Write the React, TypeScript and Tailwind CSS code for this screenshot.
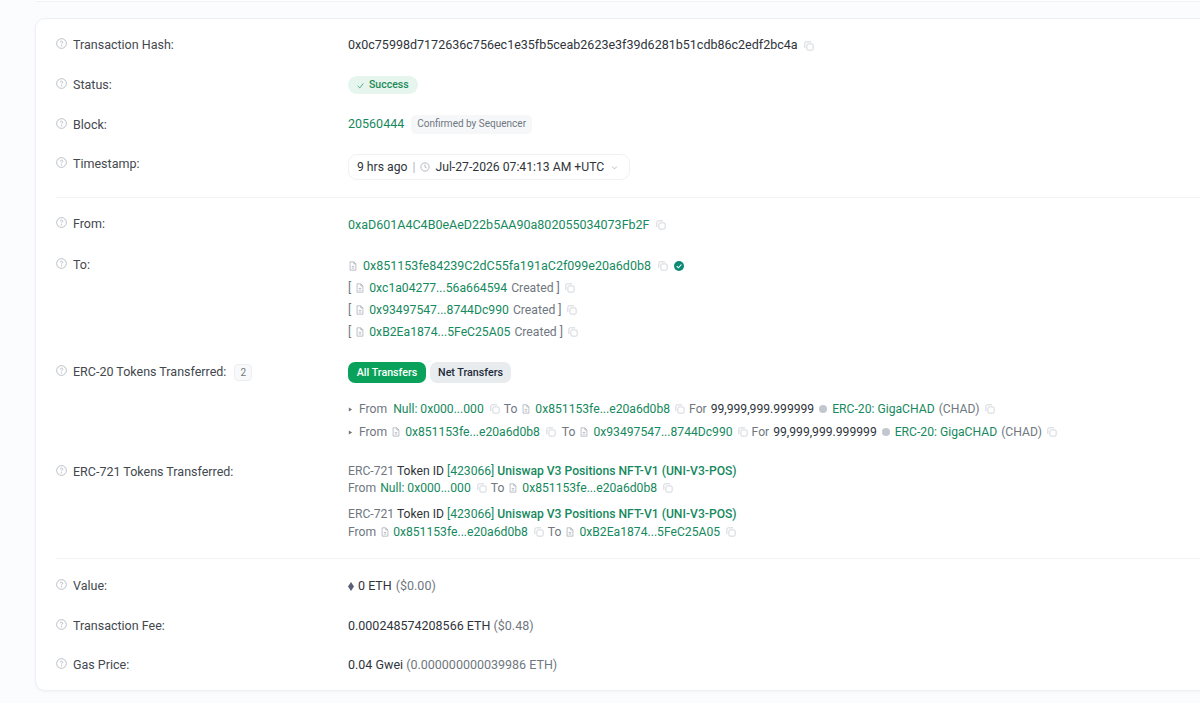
import React from "react";

const Copy = ({ c = "" }: { c?: string }) => (
  <svg viewBox="0 0 12 12" className={`inline-block w-[10px] h-[10px] shrink-0 text-[#c9ced4] ${c}`} fill="none" stroke="currentColor" strokeWidth="1">
    <rect x="3.5" y="3.5" width="7.5" height="7.5" rx="1.5" />
    <path d="M8.5 1H2.5A1.5 1.5 0 0 0 1 2.5V8.5" />
  </svg>
);
const Doc = ({ c = "" }: { c?: string }) => (
  <svg viewBox="0 0 12 12" className={`inline-block w-[10px] h-[10px] shrink-0 text-[#a4abb4] ${c}`} fill="none" stroke="currentColor" strokeWidth="0.9">
    <path d="M2.5 1h4.5l2.5 2.5V11h-7z" />
    <path d="M7 1v2.5h2.5M4.5 6.5h3M4.5 8.5h3" />
  </svg>
);
const Help = () => (
  <svg viewBox="0 0 12 12" className="w-[11px] h-[11px] shrink-0 text-[#a3a9b1]" fill="none" stroke="currentColor" strokeWidth="0.8">
    <circle cx="6" cy="6" r="5.3" />
    <path d="M4.7 4.7a1.3 1.3 0 1 1 2 1.1c-.5.3-.7.5-.7 1" />
    <circle cx="6" cy="8.6" r="0.3" />
  </svg>
);
const G = ({ children, c = "" }: { children: React.ReactNode; c?: string }) => <span className={`text-[#16895e] ${c}`}>{children}</span>;
const M = ({ children }: { children: React.ReactNode }) => <span className="text-[#6f7780]">{children}</span>;

const Label = ({ children, extra }: { children: string; extra?: React.ReactNode }) => (
  <div className="w-[292px] shrink-0 flex items-start gap-[6px] text-[12.5px] leading-[16px] text-[#43484e]">
    <span className="mt-[1px]"><Help /></span>
    <span>{children}</span>
    {extra}
  </div>
);

const Logo = () => <span className="inline-block w-[8px] h-[8px] rounded-full bg-[#c2c7ce] shrink-0 mx-[1px]" />;

const Arrow = () => (
  <svg viewBox="0 0 6 6" className="w-[5px] h-[5px] text-[#6f7780] shrink-0 mr-[2px]" fill="currentColor"><path d="M1 .5 5 3 1 5.5z" /></svg>
);

export default function App() {
  return (
    <div className="w-[1200px] h-[703px] overflow-hidden bg-[#fbfcfd] flex flex-col pl-[35px] font-['Roboto',sans-serif] text-[12.5px] leading-[16px] text-[#2f343a]">
      <div className="h-[2px] shrink-0 bg-white border-b border-[#eff1f4]" />
      <div className="mt-[16px] w-[1200px] h-[673px] shrink-0 bg-white rounded-l-[10px] border border-[#eef0f3] shadow-[0_1px_3px_rgba(0,0,0,0.04)] pl-[20px] pt-[18px]">
        <div className="flex h-[16px]">
          <Label>Transaction Hash:</Label>
          <span className="flex items-center gap-[6px] text-[12.53px] whitespace-nowrap">0x0c75998d7172636c756ec1e35fb5ceab2623e3f39d6281b51cdb86c2edf2bc4a<Copy c="mt-[1px]" /></span>
        </div>

        <div className="flex h-[20px] mt-[22px]">
          <span className="pt-[2px] flex"><Label>Status:</Label></span>
          <span className="flex items-center gap-[5px] h-[18px] mt-[1px] px-[9px] rounded-full bg-[#e6f5ee] text-[#1c8a57] text-[10.5px] font-medium">
            <svg viewBox="0 0 10 10" className="w-[7px] h-[7px]" fill="none" stroke="currentColor" strokeWidth="1"><path d="M1 5.5 4 8.5 9 2" /></svg>
            Success
          </span>
        </div>

        <div className="flex h-[20px] mt-[20px]">
          <span className="pt-[2px] flex"><Label>Block:</Label></span>
          <span className="flex items-center gap-[7px] h-[18px]">
            <G>20560444</G>
            <span className="h-[19px] px-[6px] flex items-center rounded-[5px] bg-[#f6f7f9] text-[#6f7780] text-[10px]">Confirmed by Sequencer</span>
          </span>
        </div>

        <div className="flex mt-[19px] h-[26px]">
          <span className="pt-[2px] flex"><Label>Timestamp:</Label></span>
          <span className="h-[26px] w-[282px] flex items-center pl-[8px] gap-[5px] rounded-[9px] border border-[#eff1f4] whitespace-nowrap text-[12.2px]">
            9 hrs ago <span className="text-[#aeb4bb]">|</span>
            <svg viewBox="0 0 12 12" className="w-[10px] h-[10px] shrink-0 text-[#9ca3ad]" fill="none" stroke="currentColor" strokeWidth="0.9"><circle cx="6" cy="6" r="5" /><path d="M6 3v3.2l2 1" /></svg>
            Jul-27-2026 07:41:13 AM +UTC
            <svg viewBox="0 0 10 10" className="w-[7px] h-[7px] shrink-0 ml-[2px] text-[#9ca3ad]" fill="none" stroke="currentColor" strokeWidth="1"><path d="M1.5 3.5 5 7l3.5-3.5" /></svg>
          </span>
        </div>

        <div className="mt-[17px] border-t border-[#f1f3f5]" />

        <div className="flex mt-[18px] h-[16px]">
          <Label>From:</Label>
          <span className="flex items-center gap-[6px] mt-[1px]"><G>0xaD601A4C4B0eAeD22b5AA90a802055034073Fb2F</G><Copy /></span>
        </div>

        <div className="flex mt-[25px]">
          <Label>To:</Label>
          <div className="flex flex-col gap-[6px] mt-[1px] text-[12.5px]">
            <span className="flex items-center gap-[5px]">
              <Doc /><G>0x851153fe84239C2dC55fa191aC2f099e20a6d0b8</G><Copy c="ml-[2px]" />
              <svg viewBox="0 0 12 12" className="w-[10px] h-[10px] ml-[1px]"><circle cx="6" cy="6" r="6" fill="#0b8a75" /><path d="M3.2 6.2 5.3 8.2 8.9 4.2" fill="none" stroke="#fff" strokeWidth="1.3" /></svg>
            </span>
            {["0xc1a04277...56a664594", "0x93497547...8744Dc990", "0xB2Ea1874...5FeC25A05"].map((a) => (
              <span key={a} className="flex items-center gap-[4px] text-[12.2px]">
                <M>[</M><Doc /><G>{a}</G><M>Created ]</M><Copy c="ml-[1px]" />
              </span>
            ))}
          </div>
        </div>

        <div className="flex mt-[23px]">
          <span className="pt-[1px] flex">
            <Label extra={<span className="ml-[2px] px-[5px] h-[17px] flex items-center rounded-[4px] border border-[#eceef1] bg-[#f8f9fa] text-[#6f7780] text-[10px]">2</span>}>ERC-20 Tokens Transferred:</Label>
          </span>
          <div className="flex flex-col">
            <div className="flex gap-[4px] -mt-[1px] text-[10.7px] font-medium">
              <span className="h-[21px] w-[78px] flex items-center justify-center rounded-[7px] bg-[#0aa25a] text-white">All Transfers</span>
              <span className="h-[21px] w-[81px] flex items-center justify-center rounded-[7px] bg-[#e9ecef] text-[#212b3a]">Net Transfers</span>
            </div>
            <span className="flex items-center gap-[4px] mt-[18px] whitespace-nowrap text-[12.15px]">
              <Arrow /><M>From</M><G c="ml-[2px]">Null: 0x000...000</G><Copy c="ml-[2px]" /><M>To</M><Doc /><G>0x851153fe...e20a6d0b8</G><Copy c="ml-[1px]" /><M>For</M><span>99,999,999.999999</span><Logo /><G>ERC-20: GigaCHAD</G><M>(CHAD)</M><Copy c="ml-[1px]" />
            </span>
            <span className="flex items-center gap-[4px] mt-[7px] whitespace-nowrap text-[12.15px]">
              <Arrow /><M>From</M><Doc /><G>0x851153fe...e20a6d0b8</G><Copy c="mx-[2px]" /><M>To</M><Doc /><G>0x93497547...8744Dc990</G><Copy c="ml-[1px]" /><M>For</M><span>99,999,999.999999</span><Logo /><G>ERC-20: GigaCHAD</G><M>(CHAD)</M><Copy c="ml-[1px]" />
            </span>
          </div>
        </div>

        <div className="flex mt-[24px]">
          <Label>ERC-721 Tokens Transferred:</Label>
          <div className="flex flex-col text-[12.15px] whitespace-nowrap -mt-[1px]">
            <span className="block"><M>ERC-721</M> Token ID <G>[423066]</G> <G c="font-medium">Uniswap V3 Positions NFT-V1 (UNI-V3-POS)</G></span>
            <span className="flex items-center gap-[4px] mt-[1px]"><M>From</M><G>Null: 0x000...000</G><Copy c="ml-[2px]" /><M>To</M><Doc /><G>0x851153fe...e20a6d0b8</G><Copy c="ml-[2px]" /></span>
            <span className="block mt-[10px]"><M>ERC-721</M> Token ID <G>[423066]</G> <G c="font-medium">Uniswap V3 Positions NFT-V1 (UNI-V3-POS)</G></span>
            <span className="flex items-center gap-[4px] mt-[2px]"><M>From</M><Doc c="-mr-[1px]" /><G>0x851153fe...e20a6d0b8</G><Copy c="ml-[2px]" /><M>To</M><Doc /><G>0xB2Ea1874...5FeC25A05</G><Copy c="ml-[2px]" /></span>
          </div>
        </div>

        <div className="mt-[18px] border-t border-[#f1f3f5]" />

        <div className="flex mt-[19px] h-[16px]">
          <Label>Value:</Label>
          <span className="flex items-center gap-[4px]">
            <svg viewBox="0 0 8 12" className="w-[6px] h-[9px]"><path d="M4 0 8 6 4 12 0 6z" fill="#5b5f77" /></svg>
            0 ETH <M>($0.00)</M>
          </span>
        </div>

        <div className="flex mt-[24px] h-[16px]">
          <Label>Transaction Fee:</Label>
          <span>0.000248574208566 ETH <M>($0.48)</M></span>
        </div>

        <div className="flex mt-[23px] h-[16px]">
          <Label>Gas Price:</Label>
          <span>0.04 Gwei <M>(0.000000000039986 ETH)</M></span>
        </div>
      </div>
    </div>
  );
}
